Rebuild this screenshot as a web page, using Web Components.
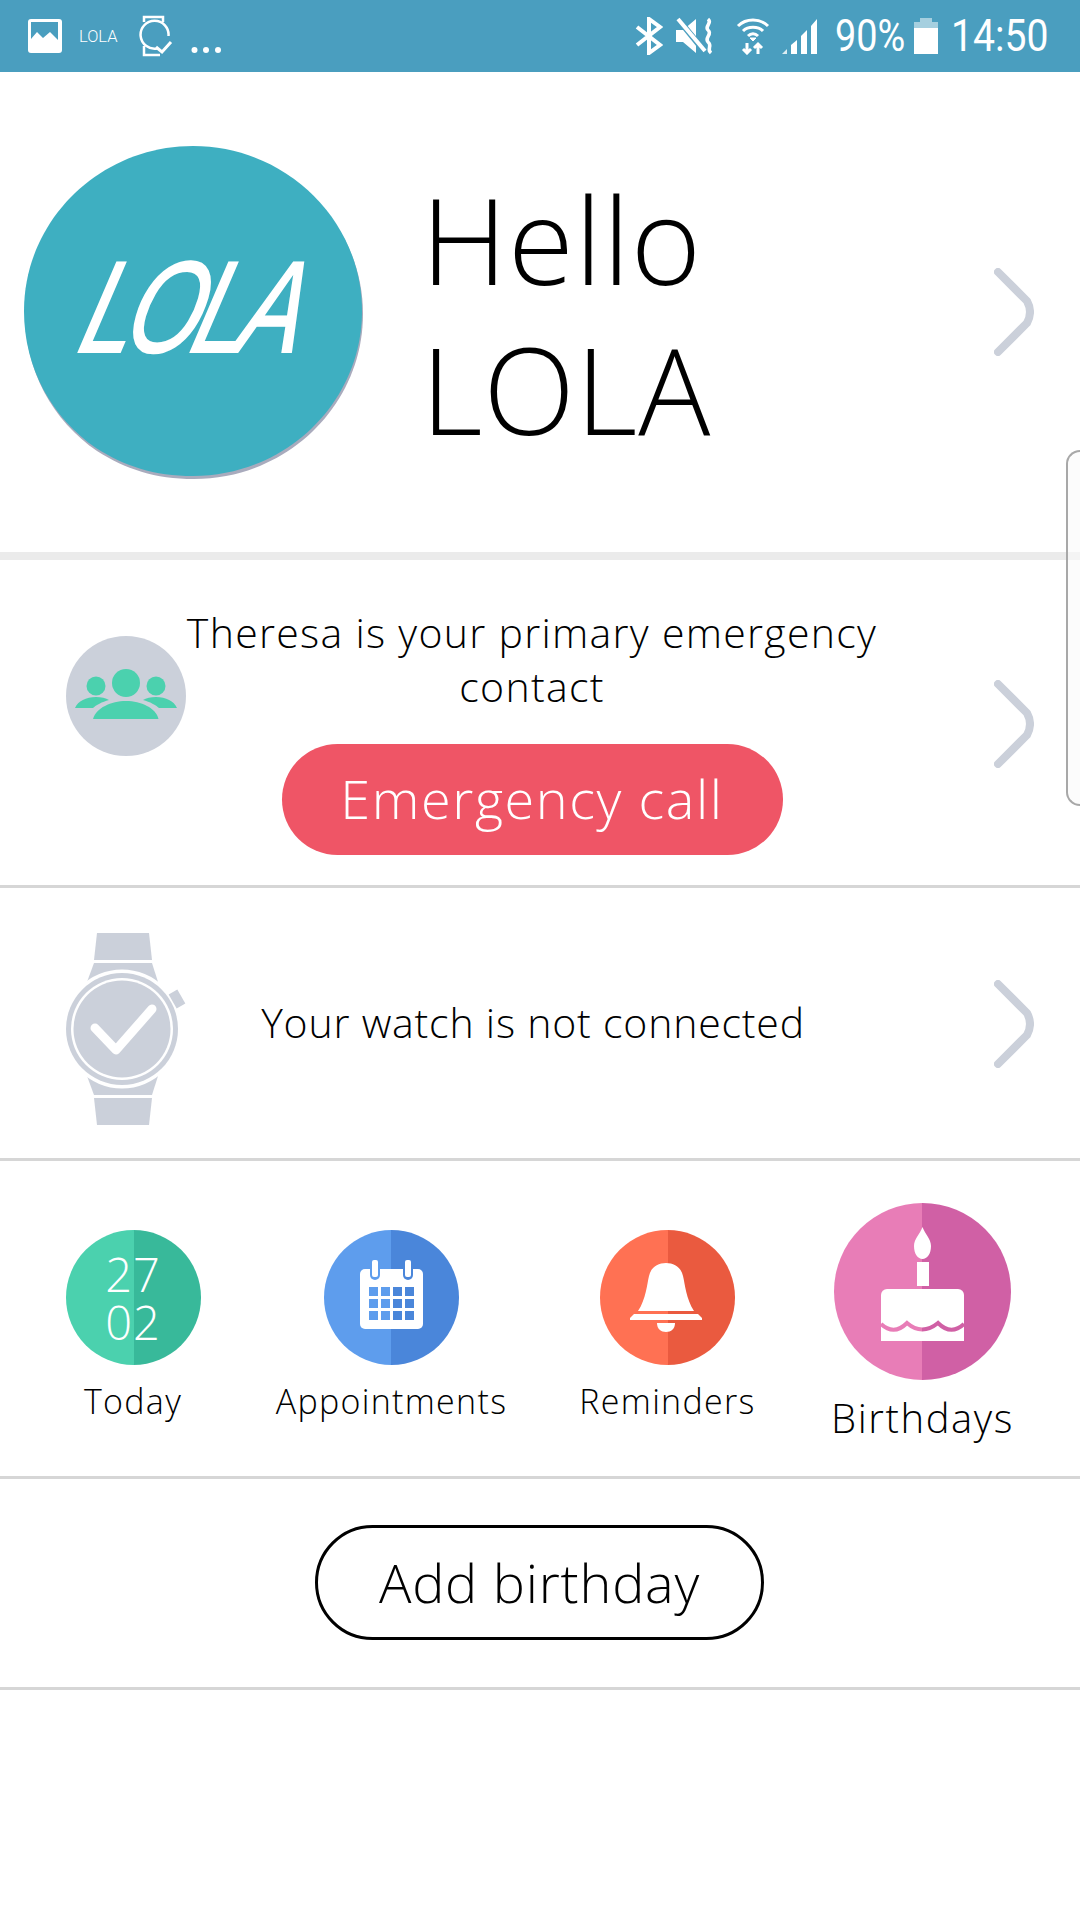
<!DOCTYPE html>
<html>
<head>
<meta charset="utf-8">
<style>
    html, body { margin: 0; padding: 0; background: #fff; }
    body { width: 1080px; height: 1920px; position: relative; overflow: hidden; font-family: "Open Sans", Lato, sans-serif; font-weight: 300; color: #000; }
</style>
</head>
<body>
<status-bar></status-bar>
<profile-row></profile-row>
<contact-row></contact-row>
<watch-row></watch-row>
<shortcut-row>
    <shortcut-tile label="Today" left="#4bd1ae" right="#38b99a"><date-badge></date-badge></shortcut-tile>
    <shortcut-tile label="Appointments" left="#5e9ded" right="#4a86da">
        <svg width="135" height="135" viewBox="0 0 135 135">
            <rect x="36" y="39" width="63" height="60" rx="5" fill="#fff"/>
            <path d="M46 39V45a5 5 0 0 0 10 0V39Z" fill="#5e9ded"/>
            <path d="M79 39V45a5 5 0 0 0 10 0V39Z" fill="#4a86da"/>
            <rect x="48" y="30" width="6" height="17" rx="2" fill="#fff"/>
            <rect x="81" y="30" width="6" height="17" rx="2" fill="#fff"/>
            <g fill="#5e9ded">
                <rect x="45" y="57" width="9" height="9"/><rect x="57" y="57" width="9" height="9"/>
                <rect x="45" y="69" width="9" height="9"/><rect x="57" y="69" width="9" height="9"/>
                <rect x="45" y="81" width="9" height="9"/><rect x="57" y="81" width="9" height="9"/>
            </g>
            <g fill="#4a86da">
                <rect x="69" y="57" width="9" height="9"/><rect x="81" y="57" width="9" height="9"/>
                <rect x="69" y="69" width="9" height="9"/><rect x="81" y="69" width="9" height="9"/>
                <rect x="69" y="81" width="9" height="9"/><rect x="81" y="81" width="9" height="9"/>
            </g>
        </svg>
    </shortcut-tile>
    <shortcut-tile label="Reminders" left="#ff7153" right="#ea5a3f">
        <svg width="135" height="135" viewBox="0 0 135 135" fill="#fff">
            <path d="M38 81C46 69 47 54 49 46C51 37 58 33 66 33C74 33 81 37 83 46C85 54 86 69 94 81Z"/>
            <path d="M34 84H98L102 88V90H30V88Z"/>
            <path d="M57 93H75C75 99 71 102 66 102C61 102 57 99 57 93Z"/>
        </svg>
    </shortcut-tile>
    <shortcut-tile big label="Birthdays" left="#e87db7" right="#d060a5">
        <svg width="177" height="177" viewBox="0 0 177 177">
            <defs>
                <linearGradient id="wave" gradientUnits="userSpaceOnUse" x1="47" y1="0" x2="130" y2="0">
                    <stop offset="0.4976" stop-color="#e87db7"/><stop offset="0.4976" stop-color="#d060a5"/>
                </linearGradient>
            </defs>
            <path d="M88.500 24C91 31 97 36 97 43C97 51 93 56 88.500 56C84 56 80 51 80 43C80 36 86 31 88.500 24Z" fill="#fff"/>
            <rect x="83" y="59" width="12" height="24" fill="#fff"/>
            <path d="M47 138V92a6 6 0 0 1 6-6H124a6 6 0 0 1 6 6V138Z" fill="#fff"/>
            <path d="M47 121Q60 133 73 120Q88 133 104 120Q117 133 130 121" fill="none" stroke="url(#wave)" stroke-width="4"/>
        </svg>
    </shortcut-tile>
</shortcut-row>
<add-row></add-row>
<edge-handle></edge-handle>

<script>
const chevron = `
    <svg width="40" height="88" viewBox="0 0 40 88" fill="none" stroke="#cbd0da" stroke-width="8" stroke-linecap="round" stroke-linejoin="round">
        <path d="M4 4L33 33Q39 44 33 55L4 84"/>
    </svg>`;

class ShadowElement extends HTMLElement {
    constructor() {
        super();
        this.attachShadow({ mode: 'open' }).innerHTML = this.constructor.template;
    }
}

class StatusBar extends ShadowElement {
    static template = `
        <style>
            :host { display: flex; align-items: center; height: 72px; background: #4a9ebf; color: #fff; font-family: Roboto, sans-serif; position: relative; }
            svg { display: block; flex: none; }
            .left { display: flex; align-items: center; margin-left: 27px; }
            .app { font-size: 16.500px; font-weight: 300; margin-left: 16px; margin-top: 1px; width: 40px; }
            .watch { margin-left: 20px; margin-top: 0; }
            .dots { margin-left: 12px; margin-top: 28px; }
            .right { display: flex; align-items: center; margin-left: auto; }
            .num { font-size: 44px; font-weight: 400; line-height: 72px; display: block; flex: none; transform-origin: left center; white-space: nowrap; }
            .level { width: 71px; transform: scaleX(.86); margin-left: 16px; }
            .time { width: 98px; transform: scaleX(.89); margin-left: 13px; margin-right: 31px; }
        </style>
        <div class="left">
            <svg width="36" height="36" viewBox="0 0 36 36">
                <rect x="1" y="1" width="34" height="34" rx="3" fill="#fff"/>
                <path d="M4 4H31V22L23 14L16 20L10 14L4 21Z" fill="#4a9ebf"/>
            </svg>
            <span class="app">LOLA</span>
            <svg class="watch" width="40" height="42" viewBox="0 0 40 42" fill="none" stroke="#fff" stroke-width="2.500">
                <path d="M5 7V2H24V7"/>
                <path d="M18 33.500A14 14 0 1 1 29.500 21"/>
                <path d="M5 31V40H21"/>
                <path d="M17 32L23 37L32 27" stroke-width="3"/>
            </svg>
            <svg class="dots" width="30" height="8" viewBox="0 0 30 8" fill="#fff">
                <circle cx="3.500" cy="4" r="3"/><circle cx="15" cy="4" r="3"/><circle cx="27" cy="4" r="3"/>
            </svg>
        </div>
        <div class="right">
            <svg width="28" height="38" viewBox="0 0 28 38" fill="none" stroke="#fff" stroke-width="4">
                <path d="M2 10L25 28L14 36V2L25 10L2 28"/>
            </svg>
            <svg style="margin-left:12px" width="40" height="38" viewBox="0 0 40 38">
                <path d="M1 13H8L21 2V36L8 25H1Z" fill="#fff"/>
                <path d="M3 2L30 35" stroke="#4a9ebf" stroke-width="6"/>
                <path d="M3 2L30 34" stroke="#fff" stroke-width="4"/>
                <path d="M33 2C38 6 29 9 33 13C38 17 29 21 33 25C38 29 31 32 36 36" fill="none" stroke="#fff" stroke-width="3.500"/>
            </svg>
            <svg style="margin-left:21px" width="34" height="38" viewBox="0 0 34 38" fill="none" stroke="#fff" stroke-width="3">
                <path d="M2 9C10 1 24 1 32 9"/>
                <path d="M7 14C12 9 22 9 27 14"/>
                <path d="M12 19C15 16 19 16 22 19"/>
                <path d="M14 21L17 24L20 21Z" fill="#fff" stroke-width="1"/>
                <path d="M11 26V36M7 32L11 36L15 32" stroke-width="3"/>
                <path d="M22 37V27M18 31L22 27L26 31" stroke-width="3"/>
            </svg>
            <svg style="margin-left:11px" width="38" height="38" viewBox="0 0 38 38" fill="#fff">
                <path d="M1 37L6 32V37Z" opacity=".8"/>
                <path d="M10 28L16 23V37H10Z"/>
                <path d="M20 19L26 13V37H20Z"/>
                <path d="M30 9L36 2V37H30Z"/>
            </svg>
            <span class="num level">90%</span>
            <svg style="margin-left:8px" width="24" height="36" viewBox="0 0 24 36">
                <rect x="0" y="4" width="24" height="32" fill="#fff"/>
                <path d="M0 10V4H6V0H18V4H24V10Z" fill="#a5cfdf"/>
            </svg>
            <span class="num time">14:50</span>
        </div>`;
}

class ProfileRow extends ShadowElement {
    static template = `
        <style>
            :host { display: grid; grid-template-columns: 338px 632px 40px; align-items: center; height: 480px; padding-left: 24px; box-sizing: content-box; border-bottom: 8px solid #ebebeb; }
            .avatar { position: relative; width: 339px; height: 333px; display: flex; align-items: center; justify-content: center; }
            .avatar svg { position: absolute; left: 0; top: 0; }
            .logo { position: relative; color: #fff; font-family: "Liberation Sans", sans-serif; font-style: italic; font-weight: 400; font-size: 130px; letter-spacing: -10px; -webkit-text-stroke: 2px #fff; transform: skewX(-16deg) scaleX(.73); margin-top: -10px; margin-left: 4px; }
            .hello { padding-left: 59px; margin-top: 4px; font-size: 120px; line-height: 150px; letter-spacing: .8px; }
            .hello div { white-space: nowrap; }
            svg { display: block; }
        </style>
        <div class="avatar">
            <svg width="339" height="333" viewBox="0 0 339 333">
                <path transform="translate(1 3)" d="M169 0C262 0 338 74 338 165C338 256 262 330 169 330C130 330 100 320 72 302C28 272 0 222 0 165C0 74 76 0 169 0Z" fill="#a9abbd"/>
                <path d="M169 0C262 0 338 74 338 165C338 256 262 330 169 330C130 330 100 320 72 302C28 272 0 222 0 165C0 74 76 0 169 0Z" fill="#3eafc1"/>
            </svg>
            <span class="logo">LOLA</span>
        </div>
        <div class="hello"><div>Hello</div><div>LOLA</div></div>
        <div class="chev">${chevron}</div>`;
}

class ContactRow extends ShadowElement {
    static template = `
        <style>
            :host { display: grid; grid-template-columns: 120px 694px 114px 40px; align-items: center; height: 325px; padding-left: 66px; box-sizing: content-box; border-bottom: 3px solid #d6d6d6; }
            svg { display: block; }
            .badge { width: 120px; height: 120px; border-radius: 50%; background: #cbd0da; align-self: start; margin-top: 76px; }
            .text { grid-column: 2; text-align: center; font-size: 41px; line-height: 54px; letter-spacing: 1.300px; white-space: nowrap; }
            .call { display: flex; align-items: center; justify-content: center; width: 501px; height: 111px; box-sizing: border-box; padding-bottom: 4px; margin: 31px auto 0; border-radius: 56px; background: #ef5566; color: #fff; font-size: 54px; letter-spacing: 1.600px; }
            .chev { grid-column: 4; margin-top: 2px; }
            .main { padding-top: 15px; padding-right: 2px; }
        </style>
        <div class="badge">
            <svg width="120" height="120" viewBox="0 0 120 120" fill="#4bd1ae">
                <circle cx="60" cy="47" r="14"/>
                <circle cx="30" cy="50" r="9.500"/>
                <circle cx="90" cy="50" r="9.500"/>
                <path d="M27 83C30 72 45 65 60 65C75 65 90 72 92.500 83Z"/>
                <path d="M9 72C12 65 20 61 30 61C35 61 40 62 43 64C36 66 30 69 27 72Z"/>
                <path d="M111 72C108 65 100 61 90 61C85 61 80 62 77 64C84 66 90 69 93 72Z"/>
            </svg>
        </div>
        <div class="main">
            <div class="text">Theresa is your primary emergency<br>contact</div>
            <div class="call">Emergency call</div>
        </div>
        <div class="chev">${chevron}</div>`;
}

class WatchRow extends ShadowElement {
    static template = `
        <style>
            :host { display: grid; grid-template-columns: 120px 694px 114px 40px; align-items: center; height: 270px; padding-left: 66px; box-sizing: content-box; border-bottom: 3px solid #d6d6d6; }
            svg { display: block; }
            .icon { margin-top: 10px; }
            .text { grid-column: 2; text-align: center; font-size: 41px; letter-spacing: .8px; margin-top: -2px; white-space: nowrap; }
            .chev { grid-column: 4; margin-top: 2px; }
        </style>
        <svg class="icon" width="120" height="193" viewBox="0 0 120 193">
            <g fill="#cbd0da">
                <path d="M31 1H83L86 28H28Z"/>
                <path d="M28 31H86L92 50H21Z"/>
                <path d="M31 193H83L86 166H28Z"/>
                <path d="M28 163H86L92 144H21Z"/>
            </g>
            <circle cx="56" cy="97" r="59.500" fill="#fff"/>
            <circle cx="56" cy="97" r="56" fill="#cbd0da"/>
            <circle cx="56" cy="97" r="51" fill="#fff"/>
            <circle cx="56" cy="97" r="48.500" fill="#cbd0da"/>
            <rect x="106" y="59" width="10" height="16" fill="#cbd0da" transform="rotate(-30 111 67)"/>
            <path d="M29 96L50 118L86 77" fill="none" stroke="#fff" stroke-width="9" stroke-linecap="round" stroke-linejoin="round"/>
        </svg>
        <div class="text">Your watch is not connected</div>
        <div class="chev">${chevron}</div>`;
}

class ShortcutRow extends ShadowElement {
    static template = `
        <style>
            :host { display: grid; grid-template-columns: 266px 251px 301px 209px; height: 315px; box-sizing: content-box; border-bottom: 3px solid #d6d6d6; }
        </style>
        <slot></slot>`;
}

class ShortcutTile extends ShadowElement {
    static template = `
        <style>
            :host { display: flex; flex-direction: column; align-items: center; padding-top: 69px; --size: 135px; --label: 34px; --gap: 13px; --track: 1.300px; }
            :host([big]) { padding-top: 42px; --size: 177px; --label: 40px; --gap: 15px; --track: 1.600px; }
            .disc { width: var(--size); height: var(--size); border-radius: 50%; display: flex; align-items: center; justify-content: center; flex: none; }
            .label { font-size: var(--label); letter-spacing: var(--track); margin-top: var(--gap); white-space: nowrap; line-height: 46px; }
        </style>
        <div class="disc"><slot></slot></div>
        <div class="label"></div>`;

    connectedCallback() {
        const left = this.getAttribute('left');
        const right = this.getAttribute('right');
        this.shadowRoot.querySelector('.disc').style.background = `linear-gradient(90deg, ${left} 50%, ${right} 50%)`;
        this.shadowRoot.querySelector('.label').textContent = this.getAttribute('label');
    }
}

class DateBadge extends ShadowElement {
    static template = `
        <style>
            :host { display: block; width: 70px; color: #fff; font-size: 47px; letter-spacing: 1px; line-height: 48px; text-align: center; }
        </style>
        27 02`;
}

class AddRow extends ShadowElement {
    static template = `
        <style>
            :host { display: flex; justify-content: center; height: 211px; padding-top: 46px; padding-right: 1px; box-sizing: border-box; border-bottom: 3px solid #d6d6d6; }
            .add { display: flex; align-items: center; justify-content: center; width: 449px; height: 115px; padding-bottom: 2px; box-sizing: border-box; border: 3px solid #000; border-radius: 58px; font-size: 54px; letter-spacing: .8px; }
        </style>
        <div class="add">Add birthday</div>`;
}

class EdgeHandle extends ShadowElement {
    static template = `
        <style>
            :host { display: block; position: absolute; left: 1066px; top: 450px; width: 14px; height: 356px; box-sizing: border-box; border: 2px solid #a8a8a8; border-right: 0; border-radius: 18px 0 0 18px; background: rgba(250, 250, 250, .6); }
        </style>`;
}

customElements.define('status-bar', StatusBar);
customElements.define('profile-row', ProfileRow);
customElements.define('contact-row', ContactRow);
customElements.define('watch-row', WatchRow);
customElements.define('shortcut-row', ShortcutRow);
customElements.define('shortcut-tile', ShortcutTile);
customElements.define('date-badge', DateBadge);
customElements.define('add-row', AddRow);
customElements.define('edge-handle', EdgeHandle);
</script>
</body>
</html>
